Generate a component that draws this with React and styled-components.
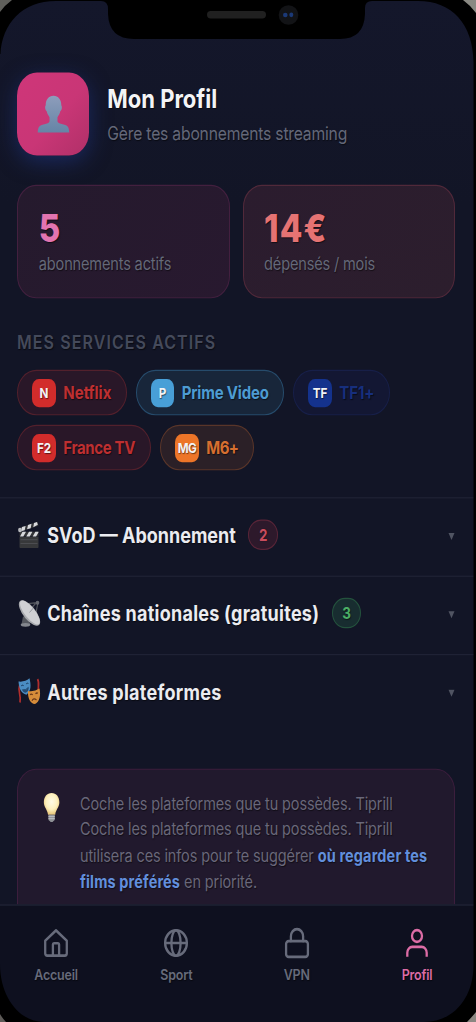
import { useState } from "react";
import styled, { createGlobalStyle } from "styled-components";

const GlobalStyle = createGlobalStyle`
  * {
    box-sizing: border-box;
  }

  body {
    margin: 0;
    background: #000;
    overflow: hidden;
  }
`;

const Device = styled.div`
  position: relative;
  width: 476px;
  height: 1022px;
  overflow: hidden;
  background: #000;
`;

// The screen is taller than its layout, everything stretches with it
const Screen = styled.div`
  display: flex;
  flex-direction: column;
  width: 476px;
  height: 873.5px;
  transform: scaleY(1.17);
  transform-origin: top left;
  background: linear-gradient(180deg, #14172b 0%, #121526 20%, #121526 100%);
  color: #ebecf0;
  font-family: Inter, "Liberation Sans", sans-serif;
  text-shadow: 0.6px 0.8px 1px rgba(0, 0, 0, 0.55);
`;

const Content = styled.main`
  flex: 1;
  min-height: 0;
  overflow: hidden;
  padding-top: 61.5px;
`;

const Header = styled.header`
  display: flex;
  align-items: center;
  gap: 18.5px;
  height: 71.8px;
  padding-left: 17.3px;
`;

const Avatar = styled.div`
  display: flex;
  align-items: center;
  justify-content: center;
  width: 71.5px;
  height: 71.8px;
  border-radius: 20px;
  background: linear-gradient(135deg, #cf3679 0%, #c93676 55%, #b03068 100%);
  box-shadow: 0 5px 20px rgba(34, 60, 150, 0.5);
`;

const Title = styled.h1`
  margin: 1.5px 0 8.5px;
  font-size: 22px;
  font-weight: 700;
  line-height: 26px;
  letter-spacing: 0;
  color: #f4f4f6;
`;

const Subtitle = styled.p`
  margin: 0;
  font-size: 15.7px;
  line-height: 20px;
  letter-spacing: -0.2px;
  color: #646879;
`;

const Stats = styled.section`
  display: grid;
  grid-template-columns: 1fr 1fr;
  gap: 12.5px;
  padding: 24.8px 20.7px 0 17.3px;
`;

const StatCard = styled.div`
  height: 96.8px;
  padding: 16.200px 20.5px;
  border: 1.2px solid ${({ $border }) => $border};
  border-radius: 19px;
  background: ${({ $background }) => $background};
`;

const StatValue = styled.div`
  font-size: 33px;
  font-weight: 800;
  line-height: 40px;
  letter-spacing: 1.1px;
  color: ${({ $color }) => $color};
`;

const StatLabel = styled.div`
  margin-top: 1.2px;
  font-size: 14.6px;
  line-height: 20px;
  letter-spacing: -0.18px;
  color: #656979;
`;

const SectionTitle = styled.h2`
  margin: 0;
  padding: 27.2px 17px 14.3px;
  font-size: 16px;
  font-weight: 620;
  line-height: 20px;
  letter-spacing: 1.08px;
  text-transform: uppercase;
  color: #454a5b;
`;

const Chips = styled.div`
  display: flex;
  flex-wrap: wrap;
  gap: 8.6px 9px;
  padding: 0 20.7px 23.5px 17.3px;
`;

const Chip = styled.div`
  display: flex;
  align-items: center;
  gap: 7.5px;
  height: 38.5px;
  width: ${({ $width }) => $width}px;
  padding-left: 14px;
  border: 1.2px solid ${({ $border }) => $border};
  border-radius: 20px;
  background: ${({ $background }) => $background};
  color: ${({ $color }) => $color};
  font-size: 15px;
  font-weight: 650;
  letter-spacing: ${({ $spacing }) => $spacing}px;
  white-space: nowrap;
`;

const ChipLogo = styled.span`
  display: flex;
  align-items: center;
  justify-content: center;
  flex-shrink: 0;
  width: 23.5px;
  height: 24px;
  border-radius: 7px;
  background: ${({ $background }) => $background};
  color: #f3f3f5;
  font-size: 11.7px;
  font-weight: 700;
  letter-spacing: ${({ $tight }) => ($tight ? "-0.5px" : 0)};
`;

const Row = styled.button`
  display: flex;
  align-items: center;
  width: 100%;
  height: 67px;
  padding: 0 21px 4px 17.3px;
  border: 0;
  border-top: 1.2px solid #202336;
  background: none;
  color: inherit;
  font: inherit;
  text-align: left;
  text-shadow: inherit;
  cursor: pointer;
`;

const RowLabel = styled.span`
  margin-left: 6px;
  font-size: 18px;
  font-weight: 700;
  letter-spacing: ${({ $spacing }) => $spacing}px;
`;

const Badge = styled.span`
  display: flex;
  align-items: center;
  justify-content: center;
  width: 29.5px;
  height: 26px;
  margin: -1px 0 0 12.5px;
  border: 1.2px solid ${({ $border }) => $border};
  border-radius: 13px;
  background: ${({ $background }) => $background};
  color: ${({ $color }) => $color};
  font-size: 13.5px;
  font-weight: 650;
`;

const Caret = styled.svg`
  margin: 3px 0 0 auto;
`;

const Tip = styled.aside`
  display: flex;
  align-items: flex-start;
  height: 150px;
  margin: 30.2px 20.7px 0 17.3px;
  padding: 18.3px 20px 0 20.500px;
  border: 1.2px solid #3c1e3d;
  border-radius: 19px;
  background: #21192d;
`;

const TipText = styled.p`
  width: 365px;
  margin: 0 0 0 16px;
  font-size: 14.5px;
  line-height: 22.5px;
  letter-spacing: -0.12px;
  white-space: nowrap;
  color: #6a687a;

  strong {
    color: #628fdc;
    font-weight: 690;
    letter-spacing: 0.13px;
  }
`;

const TabBar = styled.nav`
  display: flex;
  justify-content: space-between;
  flex-shrink: 0;
  height: 100.3px;
  padding: 18.2px 19px 0 16px;
  border-top: 1.2px solid #24283a;
  background: #0e101f;
`;

const Tab = styled.a`
  display: flex;
  flex-direction: column;
  align-items: center;
  gap: 5px;
  width: 80px;
  color: ${({ $active }) => ($active ? "#dc6ca5" : "#676b7b")};
  font-size: 12.5px;
  font-weight: 580;
  line-height: 18px;
  letter-spacing: -0.2px;
`;

const TabIcon = styled.svg`
  width: 28px;
  height: 28px;
  fill: none;
  stroke: currentColor;
  stroke-width: 2.3;
  stroke-linecap: round;
  stroke-linejoin: round;
`;

const Frame = styled.svg`
  position: absolute;
  inset: 0;
  pointer-events: none;
`;

const services = [
  { logo: "N", name: "Netflix", width: 109.5, spacing: -0.02, logoColor: "#d22c2b", color: "#bd2f31", border: "#52202c", background: "#291728" },
  { logo: "P", name: "Prime Video", width: 148.5, spacing: -0.2, logoColor: "#489fd7", color: "#4d9cd2", border: "#264b6b", background: "#18263a" },
  { logo: "TF", name: "TF1+", width: 96.5, spacing: -0.1, logoColor: "#14328d", color: "#172f7d", border: "#171f48", background: "#131733" },
  { logo: "F2", name: "France TV", width: 134, spacing: -0.36, logoColor: "#d22c2b", color: "#bd2f31", border: "#52202c", background: "#291728" },
  { logo: "MG", name: "M6+", width: 94, spacing: -0.6, logoColor: "#ed7528", color: "#d66f30", border: "#593529", background: "#2b2027" },
];

function PersonGlyph() {
  return (
    <svg width="33" height="33" viewBox="0 0 34 34">
      <defs>
        <linearGradient id="person" x1="0" y1="0" x2="0" y2="1">
          <stop offset="0" stopColor="#8e9dbb" />
          <stop offset="1" stopColor="#6584a6" />
        </linearGradient>
      </defs>
      <path
        fill="url(#person)"
        d="M17 .8c5 0 8 3.500 8 8 0 1 .8 1.200.6 2.800-.2 1.600-.9 2.200-1.500 2.800-.7 2.500-1.700 4-3 5.300v3.400c0 1.300 1 1.700 2.500 2.100l5.600 1.500c3 .9 3.800 2.900 4 6.500H.8c.2-3.600 1-5.600 4-6.500l5.600-1.500c1.500-.4 2.500-.8 2.500-2.100v-3.400c-1.300-1.300-2.300-2.800-3-5.300-.6-.6-1.300-1.200-1.500-2.800-.2-1.600.6-1.800.6-2.800 0-4.500 3-8 8-8z"
      />
    </svg>
  );
}

function ClapperGlyph() {
  return (
    <svg width="24" height="24" viewBox="0 0 24 24">
      <path d="M1.500 6.500 20.500 1l1 3.400L3 9.500z" fill="#343538" />
      <path d="M5 5.500l3.600-1-.9 3.600-3.600 1zM11 3.700l3.500-1-.8 3.700-3.600 1zM17 2l3-.9.8 2.300-4.500 2.300z" fill="#d8d9dc" />
      <path d="M2.500 9.500h19v4h-19z" fill="#343538" />
      <path d="M5.500 9.500H9l-2.700 4H3zM12 9.500h3.400l-2.700 4H9.300zM18.400 9.500h3.100v.5l-2.400 3.500h-3.400z" fill="#d8d9dc" />
      <path d="M2.500 14h19v8.500q0 .8-.8.8H3.300q-.8 0-.8-.8z" fill="#37383a" />
      <path d="M3.500 16.300h17M3.500 19.500h17" stroke="#55565a" strokeWidth=".7" />
      <circle cx="3" cy="8" r="1.900" fill="#b8babf" />
    </svg>
  );
}

function DishGlyph() {
  return (
    <svg width="24" height="24" viewBox="0 0 24 24">
      <path d="M6 15l-1.500 6.500h9L9 15z" fill="#55585f" />
      <ellipse cx="8.500" cy="22" rx="4.800" ry="1.600" fill="#84878e" />
      <path d="M12 10l8-7.500M19 12l1.800-8.500M11 4l9-1" stroke="#55585f" strokeWidth="1.100" />
      <circle cx="20.500" cy="3.200" r="1.800" fill="#64676f" />
      <ellipse cx="12.500" cy="12" rx="6" ry="14" transform="rotate(-44 12.500 12)" fill="#a7a9ad" />
      <ellipse cx="12.900" cy="11.500" rx="4.900" ry="13.300" transform="rotate(-44 12.900 11.500)" fill="#cfd0d3" />
      <path d="M12.500 11.500l4-4" stroke="#8b8e95" strokeWidth=".8" />
    </svg>
  );
}

function MasksGlyph() {
  return (
    <svg width="24" height="24" viewBox="0 0 24 24" fill="none">
      <path d="M2.500 7c-2 5 2 8 .5 14.500M20.500 1.500c3 4-1 8 1.500 13" stroke="#b02e2d" strokeWidth="1.700" />
      <path d="M1.500 3.500C5.500 4 9.500 3 12.500.8c1.500 5.500 2 10.700-3 14-5.500-1-7.500-5.500-8-11.300z" fill="#4b8dc3" />
      <path d="M4 7.300q1.500-1.500 2.800-.2M9 5.700q1.300-1.500 2.500-.5M5.500 10.500q3.500.7 5.800-2-.3 4-3 4.200-1.800 0-2.800-2.200z" stroke="#20496f" fill="#284f76" strokeWidth=".8" />
      <path d="M11 11.500q6 1 11.500-2c1.500 6 0 11.500-4.500 13.300-5-.8-7.300-5.300-7-11.300z" fill="#d58c3a" />
      <path d="M13 14.700q1.400-1 2.700.2M18.500 14q1.300-1.200 2.400-.4M15 20q1.500-3 4.500-.8" stroke="#693719" strokeWidth="1.100" />
    </svg>
  );
}

function BulbGlyph() {
  return (
    <svg width="26" height="28" viewBox="0 0 26 28">
      <defs>
        <radialGradient id="bulb" cx=".5" cy=".4" r=".6">
          <stop offset="0" stopColor="#fffbe6" />
          <stop offset=".6" stopColor="#fdf0bd" />
          <stop offset="1" stopColor="#e7c477" />
        </radialGradient>
      </defs>
      <path d="M13 1.500c4.800 0 8 3.400 8 8 0 4.300-3.600 6.300-4.300 11H9.300C8.600 15.800 5 13.800 5 9.500c0-4.600 3.200-8 8-8z" fill="url(#bulb)" />
      <path d="M9.700 20.500h6.600v4q0 1.200-1.300 1.500l-1 1h-2l-1-1q-1.300-.3-1.300-1.500z" fill="#8e9095" />
      <path d="M9.700 22.200h6.600M9.700 24h6.600" stroke="#c6c7ca" strokeWidth=".8" />
    </svg>
  );
}

const categories = [
  { id: "svod", Glyph: ClapperGlyph, label: "SVoD — Abonnement", spacing: 0, count: 2, color: "#c94c5e", border: "#592538", background: "#2d192b" },
  { id: "free", Glyph: DishGlyph, label: "Chaînes nationales (gratuites)", spacing: 0.26, count: 3, color: "#4bae65", border: "#24523d", background: "#182d30" },
  { id: "other", Glyph: MasksGlyph, label: "Autres plateformes", spacing: 0.26 },
];

const tabs = [
  {
    label: "Accueil",
    icon: <path d="M14 3.200 3.200 12v10.800a2 2 0 0 0 2 2h17.600a2 2 0 0 0 2-2V12zM10.900 24.600V15.200a1 1 0 0 1 1-1h4.200a1 1 0 0 1 1 1v9.400" />,
  },
  {
    label: "Sport",
    icon: (
      <>
        <circle cx="14" cy="14" r="10.900" />
        <ellipse cx="14" cy="14" rx="4.600" ry="10.900" />
        <path d="M3.100 14h21.800" />
      </>
    ),
  },
  {
    label: "VPN",
    icon: (
      <>
        <rect x="3.100" y="12.400" width="21.800" height="13.400" rx="2.500" />
        <path d="M7.900 12.300V8.300a6.100 6.100 0 0 1 12.200 0v4" />
      </>
    ),
  },
  {
    label: "Profil",
    icon: (
      <>
        <circle cx="14" cy="8" r="5" />
        <path strokeLinecap="butt" d="M4.300 25.800v-3.500a5 5 0 0 1 5-5h9.400a5 5 0 0 1 5 5v3.500" />
      </>
    ),
  },
];

function DeviceFrame() {
  return (
    <Frame width="476" height="1022" viewBox="0 0 476 1022">
      <path
        fill="#000"
        fillRule="evenodd"
        d="M0 0H476V1022H0zM.5 54C2 24 22 1 56 1H101Q108 1 108 9V14Q109 39 134 39H340Q364 39 365 14V8Q365 1 372 1H418C452 1 473 24 473.500 62V966C473 1000 452 1022 424 1022H44C20 1022 0 998 0 964V54z"
      />
      <path d="M0 0H12Q5 5 0 12z" fill="#5f5f5b" />
      <path d="M463 0H476V13Q470 5 463 0z" fill="#8a8983" />
      <path d="M0 1014Q3 1019 6 1022H0z" fill="#5d5a57" />
      <path d="M476 1012Q471 1018 467 1022H476z" fill="#8a8681" />
      <rect x="207" y="11" width="59" height="7.500" rx="3.700" fill="#202020" />
      <circle cx="288.500" cy="15" r="9.800" fill="#121316" />
      <ellipse cx="285.300" cy="15" rx="2.300" ry="2.200" fill="#1b3976" />
      <ellipse cx="291.300" cy="14.800" rx="2" ry="2.400" fill="#1b3976" />
    </Frame>
  );
}

function App() {
  const [activeTab, setActiveTab] = useState("Profil");

  return (
    <>
      <GlobalStyle />
      <Device>
        <Screen>
          <Content>
            <Header>
              <Avatar>
                <PersonGlyph />
              </Avatar>
              <div>
                <Title>Mon Profil</Title>
                <Subtitle>Gère tes abonnements streaming</Subtitle>
              </div>
            </Header>

            <Stats>
              <StatCard $border="#43203f" $background="linear-gradient(135deg, #251a2d, #28192f)">
                <StatValue $color="#e274b0">5</StatValue>
                <StatLabel>abonnements actifs</StatLabel>
              </StatCard>
              <StatCard $border="#51293a" $background="linear-gradient(135deg, #2b1c2e, #2c1e2d)">
                <StatValue $color="#e57373">14€</StatValue>
                <StatLabel>dépensés / mois</StatLabel>
              </StatCard>
            </Stats>

            <SectionTitle>Mes services actifs</SectionTitle>
            <Chips>
              {services.map((s) => (
                <Chip
                  key={s.name}
                  $width={s.width}
                  $spacing={s.spacing}
                  $color={s.color}
                  $border={s.border}
                  $background={s.background}
                >
                  <ChipLogo $background={s.logoColor} $tight={s.logo === "MG"}>
                    {s.logo}
                  </ChipLogo>
                  {s.name}
                </Chip>
              ))}
            </Chips>

            {categories.map(({ id, Glyph, label, spacing, count, color, border, background }) => (
              <Row key={id}>
                <Glyph />
                <RowLabel $spacing={spacing}>{label}</RowLabel>
                {count && (
                  <Badge $color={color} $border={border} $background={background}>
                    {count}
                  </Badge>
                )}
                <Caret width="7" height="7" viewBox="0 0 7 7">
                  <path d="M.5.500h6l-3 6z" fill="#505462" />
                </Caret>
              </Row>
            ))}

            <Tip>
              <BulbGlyph />
              <TipText>
                Coche les plateformes que tu possèdes. Tiprill
                <br />
                Coche les plateformes que tu possèdes. Tiprill
                <br />
                utilisera ces infos pour te suggérer <strong>où regarder tes</strong>
                <br />
                <strong>films préférés</strong> en priorité.
              </TipText>
            </Tip>
          </Content>

          <TabBar>
            {tabs.map(({ label, icon }) => (
              <Tab key={label} $active={activeTab === label} onClick={() => setActiveTab(label)}>
                <TabIcon viewBox="0 0 28 28">{icon}</TabIcon>
                {label}
              </Tab>
            ))}
          </TabBar>
        </Screen>
        <DeviceFrame />
      </Device>
    </>
  );
}

export default App;
